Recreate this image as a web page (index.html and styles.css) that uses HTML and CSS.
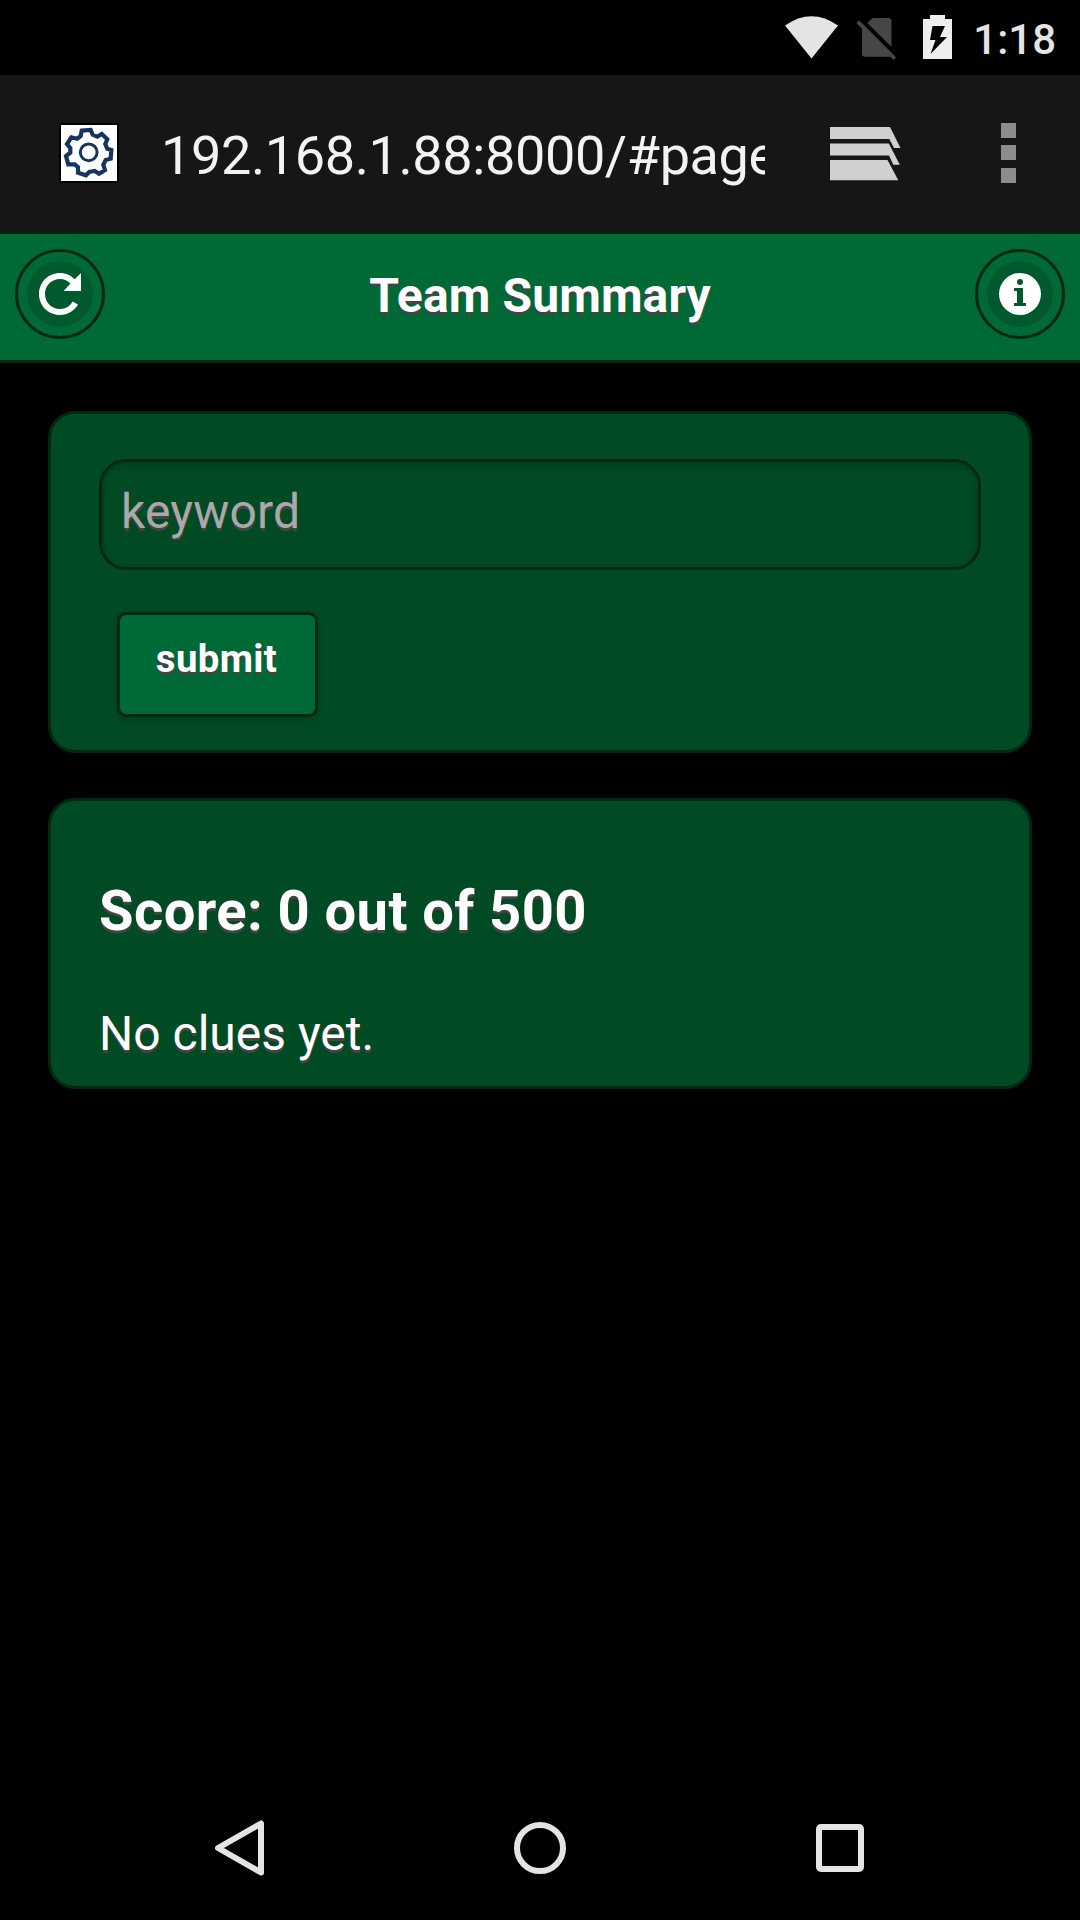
FILE: index.html
```html
<!DOCTYPE html>
<html lang="en">
<head>
<meta charset="utf-8">
<title>Team Summary</title>
<link rel="stylesheet" href="styles.css">
</head>
<body>
<div class="status-bar">
  <svg class="status-icons" viewBox="0 0 180 75" width="180" height="75" aria-hidden="true">
    <path fill="#e4e4e4" d="M5 25.500Q31.500 7 58 25.500L31.500 58.500Z"/>
    <g fill="#464646">
      <path d="M87.300 23L92.500 18H108Q111.500 18 111.500 21.500V47Z"/>
      <path d="M76.300 23L79 20.200L116 57.200L113.500 60L110.300 56.800H85Q82 56.800 82 53.800V28.700Z"/>
    </g>
    <path fill="#eee" fill-rule="evenodd" d="M143 59V19H150V15H165V19H172V59ZM152.500 26L150 40H155.500L150.500 54L167 37H160L165 26Z"/>
  </svg>
  <span class="clock">1:18</span>
</div>
<div class="browser-bar">
  <div class="favicon">
    <svg viewBox="0 0 56 56" width="56" height="56" fill="none" stroke="#17345e" aria-hidden="true">
      <circle cx="27.700" cy="27.300" r="8.400" stroke-width="3"/>
      <path stroke-width="4.200" d="M20.700 5.700L29.700 5L31.700 9.700L36.300 11.700L40.700 9L46.300 14.300L44.300 19L46.300 23.700L50.300 25L49.700 33.700L44.700 35L42.300 39.700L44 45L38 48.700L33.700 46L28.300 47L25 50.300L17 47.700L17 42.300L13.700 39.300L7.300 39.300L5 31L9.300 27.700L9.300 23L6 19L10.300 12.300L16.300 13.700L19.700 11Z"/>
    </svg>
  </div>
  <div class="url">192.168.1.88:8000/#page</div>
  <svg class="tabs-icon" viewBox="0 0 72 54" width="72" height="54" fill="#d0d0d0" aria-hidden="true">
    <path d="M0 0H60L70.500 21H64L59.300 12H0Z"/>
    <path d="M0 16.500H58.800L69.800 37.800H63.300L59 28.500H0Z"/>
    <path d="M0 33H57.500L68.300 53.300H0Z"/>
  </svg>
  <div class="menu-icon"><i></i><i></i><i></i></div>
</div>
<header class="header">
  <button class="icon-button" aria-label="Refresh">
    <svg viewBox="0 0 14 14" fill="#fff"><path d="M11.900 2.100C10.700.8 8.900 0 7 0 3.100 0 0 3.100 0 7s3.100 7 7 7c2.600 0 4.800-1.400 6-3.500l-1.800-1C10.500 11 8.900 12 7 12c-2.800 0-5-2.200-5-5s2.200-5 5-5c1.400 0 2.600.6 3.500 1.500L8.200 6H14V0z"/></svg>
  </button>
  <h1>Team Summary</h1>
  <button class="icon-button" aria-label="Info">
    <svg viewBox="0 0 14 14" fill="#fff" fill-rule="evenodd"><path d="M7 0a7 7 0 1 0 0 14A7 7 0 0 0 7 0zM7 2a1 1 0 1 1 0 2 1 1 0 0 1 0-2zM9 11H5v-1h1V6H5V5h3v5h1z"/></svg>
  </button>
</header>
<main>
  <form class="card form-card">
    <input class="keyword" type="text" placeholder="keyword">
    <button class="submit" type="button">submit</button>
  </form>
  <section class="card score-card">
    <h3>Score: 0 out of 500</h3>
    <p>No clues yet.</p>
  </section>
</main>
<nav class="nav-bar">
  <svg viewBox="0 0 60 60" width="60" height="60"><path d="M51 3.500V52.500L8 28Z"/></svg>
  <svg viewBox="0 0 60 60" width="60" height="60"><circle cx="30" cy="28" r="23"/></svg>
  <svg viewBox="0 0 60 60" width="60" height="60"><rect x="9" y="7" width="42" height="42" rx="2"/></svg>
</nav>
</body>
</html>
```
FILE: styles.css
```css
* { box-sizing: border-box; }
body {
  margin: 0;
  width: 1080px;
  height: 1920px;
  display: flex;
  flex-direction: column;
  overflow: hidden;
  background: #000;
  color: #fff;
  font-family: Roboto, sans-serif;
  font-size: 48px;
}
.status-bar {
  height: 75px;
  display: flex;
  justify-content: flex-end;
  align-items: center;
  padding-right: 24px;
}
.status-icons { display: block; margin-right: 13px; }
.clock {
  color: #e4e4e4;
  font-size: 42px;
  font-weight: 500;
  line-height: 49px;
  padding-top: 3px;
}
.browser-bar {
  height: 156px;
  display: flex;
  align-items: center;
  padding: 0 64px 0 59px;
  background: #161616;
}
.favicon {
  width: 60px;
  height: 60px;
  border: 2px solid #000;
  background: #fff;
}
.favicon svg { display: block; }
.url {
  width: 604px;
  margin-left: 42px;
  overflow: hidden;
  white-space: nowrap;
  color: #f3f3f3;
  font-size: 54px;
  letter-spacing: -.38px;
  line-height: 64px;
  padding-top: 6px;
}
.tabs-icon { margin: 2px 0 0 65px; }
.menu-icon {
  display: flex;
  flex-direction: column;
  gap: 7px;
  margin-left: auto;
}
.menu-icon i { width: 15px; height: 15px; background: #8c8c8c; }
.menu-icon i:last-child { margin-top: 1px; }
.header {
  height: 132px;
  display: flex;
  justify-content: space-between;
  padding: 15px;
  border: solid #002812;
  border-width: 3px 0;
  background: #006a36;
}
.header h1 {
  margin: 0;
  padding-top: 16px;
  font-size: 48px;
  letter-spacing: .13px;
  line-height: 62px;
  font-weight: 700;
  text-shadow: 0 3px 0 #444;
}
.icon-button {
  width: 90px;
  height: 90px;
  padding: 9px;
  border: 3px solid #002812;
  border-radius: 50%;
  background: none;
}
.icon-button svg {
  display: block;
  overflow: visible;
  width: 66px;
  height: 66px;
  padding: 12px;
  border-radius: 50%;
  background: #005a2e;
}
main {
  flex: 1;
  display: flex;
  flex-direction: column;
  gap: 45px;
  padding: 48px;
}
.card {
  border: 3px solid #002812;
  border-radius: 27px;
  background: #004b23;
  text-shadow: 0 3px 0 #444;
}
.form-card {
  height: 342px;
  padding: 45px 48px;
}
.keyword {
  display: block;
  width: 100%;
  height: 111px;
  padding: 0 21px 6px 19px;
  border: 3px solid #002812;
  border-radius: 27px;
  background: transparent;
  box-shadow: inset 0 3px 9px rgba(0, 0, 0, .2);
  color: #fff;
  font: inherit;
  letter-spacing: .15px;
  text-shadow: inherit;
}
.keyword::placeholder { color: #a9a9a9; }
.submit {
  display: block;
  width: 201px;
  height: 105px;
  margin: 42px 0 0 18px;
  padding: 0 2px 13px 0;
  border: 3px solid #002812;
  border-radius: 9px;
  background: #006a36;
  box-shadow: 0 3px 9px rgba(0, 0, 0, .2);
  color: #fff;
  font: 700 38.400px/49px Roboto, sans-serif;
  letter-spacing: .35px;
  text-shadow: inherit;
}
.score-card {
  height: 291px;
  padding: 0 48px;
}
.score-card h3 {
  margin: 74px 0 0;
  font-size: 56.160px;
  letter-spacing: .4px;
  line-height: 73px;
  font-weight: 700;
}
.score-card p {
  margin: 55px 0 0;
  line-height: 62px;
}
.nav-bar {
  height: 144px;
  display: flex;
  justify-content: center;
  align-items: center;
  gap: 240px;
  padding-top: 4px;
}
.nav-bar svg {
  fill: none;
  stroke: #e4e4e4;
  stroke-width: 6;
  stroke-linejoin: round;
}
```
